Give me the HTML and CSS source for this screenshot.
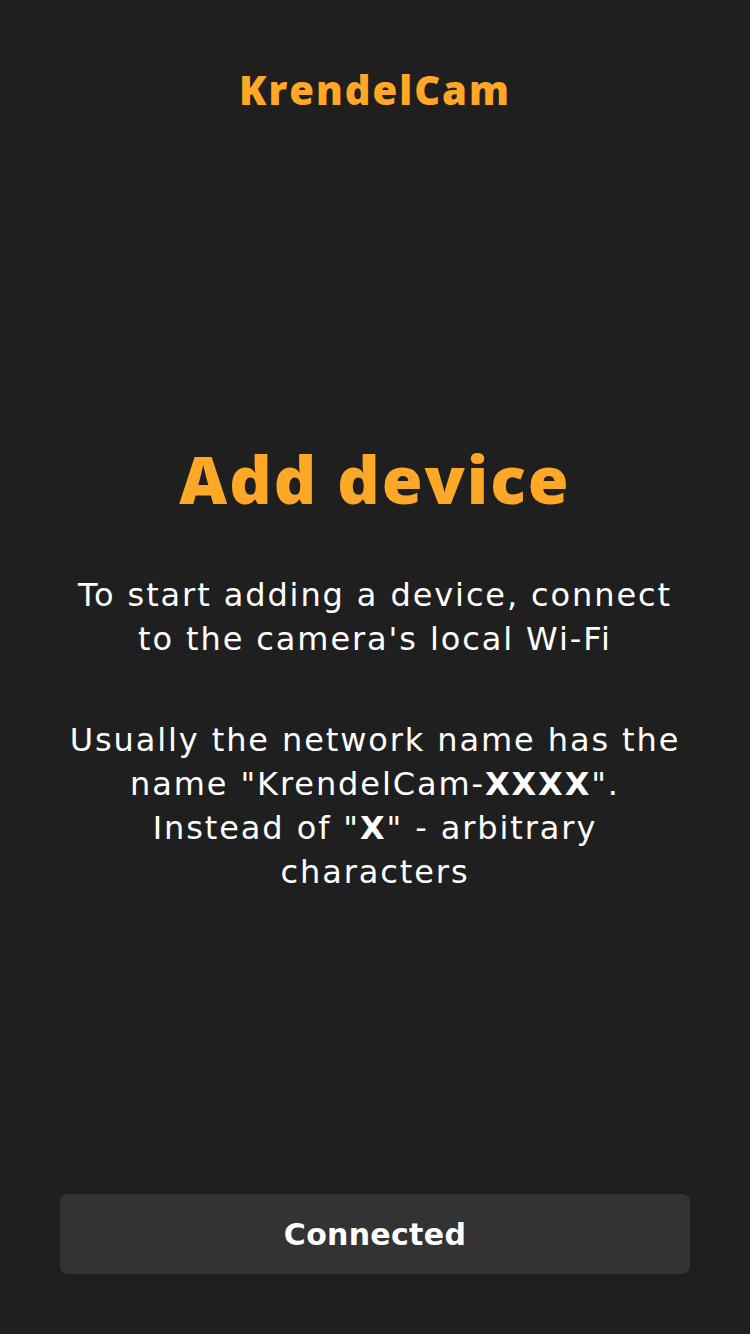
FILE: index.html
```html
<!DOCTYPE html>
<html lang="en">
<head>
<meta charset="utf-8">
<title>KrendelCam</title>
<link rel="stylesheet" href="styles.css">
</head>
<body>
<div class="screen">
  <header class="brand">KrendelCam</header>
  <main class="content">
    <h1 class="title">Add device</h1>
    <p class="text">To start adding a device, connect<br>to the camera's local Wi-Fi</p>
    <p class="text text-second">Usually the network name has the<br>name "KrendelCam-<b>XXXX</b>".<br>Instead of "<b>X</b>" - arbitrary<br>characters</p>
  </main>
  <footer class="actions">
    <button class="btn">Connected</button>
  </footer>
</div>
</body>
</html>
```
FILE: styles.css
```css
html, body {
  margin: 0;
  padding: 0;
  background: #1f1f1f;
}
.screen {
  width: 750px;
  height: 1334px;
  display: flex;
  flex-direction: column;
  font-family: "DejaVu Sans", "Open Sans", sans-serif;
  color: #ffffff;
  text-align: center;
}
.brand {
  padding-top: 60px;
  height: 60px;
  line-height: 60px;
  font-family: "Open Sans", sans-serif;
  font-size: 40px;
  font-weight: 800;
  letter-spacing: 2px;
  color: #ffa726;
}
.content {
  flex: 1;
  padding-top: 318px;
}
.title {
  margin: 0;
  font-family: "Open Sans", sans-serif;
  font-size: 66px;
  line-height: 80px;
  font-weight: 800;
  letter-spacing: 2px;
  color: #ffa726;
}
.text {
  margin: 55px 0 0;
  font-size: 32px;
  line-height: 44px;
  font-weight: 400;
  letter-spacing: 1.9px;
}
.text-second {
  margin-top: 57px;
}
.text b {
  font-weight: 700;
}
.actions {
  padding: 0 60px 60px;
}
.btn {
  width: 100%;
  height: 80px;
  border: 0;
  border-radius: 8px;
  background: #333333;
  color: #ffffff;
  font-family: inherit;
  font-size: 30px;
  font-weight: 700;
  letter-spacing: 0.3px;
}
```
